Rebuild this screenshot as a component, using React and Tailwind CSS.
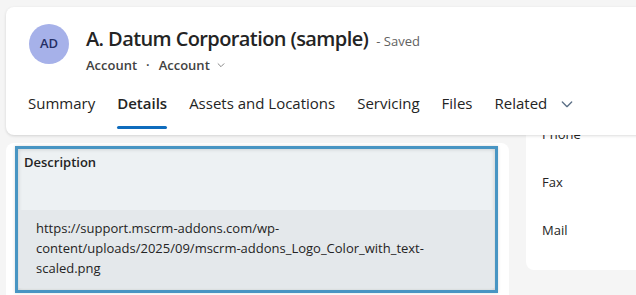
const tabs = ['Summary', 'Details', 'Assets and Locations', 'Servicing', 'Files'];

const Chevron = ({ className }) => (
  <svg viewBox="0 0 12 12" className={className} fill="none" stroke="currentColor" strokeWidth="1" strokeLinecap="round" strokeLinejoin="round">
    <path d="M2.5 4.5 6 8l3.5-3.5" />
  </svg>
);

const App = () => {
  return (
    <div className="w-[636px] h-[295px] overflow-hidden bg-[#f5f5f5] pt-[7px] pl-[6px] font-['Segoe_UI','Open_Sans',sans-serif] text-[#242424]">
      {/* header */}
      <div className="relative z-10 mr-[-20px] h-[128px] rounded-lg bg-white shadow-[0_1px_3px_rgba(0,0,0,0.14)] pl-[23px] pt-[17px]">
        <div className="flex">
          <div className="flex h-10 w-10 shrink-0 items-center justify-center rounded-full bg-[#a6b1e9] text-[13px] font-semibold text-[#242f66]">
            AD
          </div>
          <div className="ml-[17px] mt-[1px]">
            <div className="flex items-baseline h-[28px]">
              <span className="text-[20px] leading-[28px] font-semibold tracking-[-0.6px] text-[#242424]">A. Datum Corporation (sample)</span>
              <span className="ml-[8px] text-[13px] text-[#616161]">- Saved</span>
            </div>
            <div className="mt-[3px] flex items-center text-[13px] leading-[18px] font-semibold text-[#424242]">
              <span>Account</span>
              <span className="mx-[9px]">·</span>
              <span>Account</span>
              <Chevron className="ml-[6px] h-[10px] w-[10px] text-[#707070]" />
            </div>
          </div>
        </div>
        <div className="mt-[18px] ml-[-1px] flex gap-[22px] text-[15px] leading-[22px] text-[#242424]">
          {tabs.map((t) => (
            <div key={t} className="flex flex-col">
              <span className={t === 'Details' ? 'font-semibold' : ''}>{t}</span>
              <div className={`mt-[12px] h-[3px] rounded-full ${t === 'Details' ? 'bg-[#0f6cbd]' : 'bg-transparent'}`} />
            </div>
          ))}
          <div className="flex items-start">
            <span>Related</span>
            <Chevron className="ml-[12px] mt-[4px] h-[16px] w-[16px] text-[#5b6f86]" />
          </div>
        </div>
      </div>

      {/* content */}
      <div className="mt-[8px] flex gap-[17px]">
        <div className="h-[200px] w-[503px] shrink-0 rounded-lg bg-white pt-[3px] pl-[9px] pr-[11px]">
          <div className="h-[147px] border-[3px] border-[#4895c3] bg-[#edf1f3] shadow-[inset_0_0_4px_rgba(0,0,0,0.18),0_0_3px_rgba(0,0,0,0.15)]">
            <div className="pl-[6px] pt-[4px] text-[13px] leading-[18px] font-semibold text-[#242424]">Description</div>
            <div className="mx-[1px] mt-[39px] bg-[#e4e8eb] pl-[17px] pt-[8px] pb-[10px] text-[13px] leading-[20px] text-[#242424]">
              https://support.mscrm-addons.com/wp-<br />
              content/uploads/2025/09/mscrm-addons_Logo_Color_with_text-<br />
              scaled.png
            </div>
          </div>
        </div>
        <div className="mt-[-32px] h-[159px] flex-1 rounded-bl-lg bg-white pl-[16px] text-[13px] text-[#242424]">
          <div className="flex h-[48px] items-center">Phone</div>
          <div className="flex h-[48px] items-center">Fax</div>
          <div className="flex h-[48px] items-center">Mail</div>
        </div>
      </div>
    </div>
  );
};

export default App;
